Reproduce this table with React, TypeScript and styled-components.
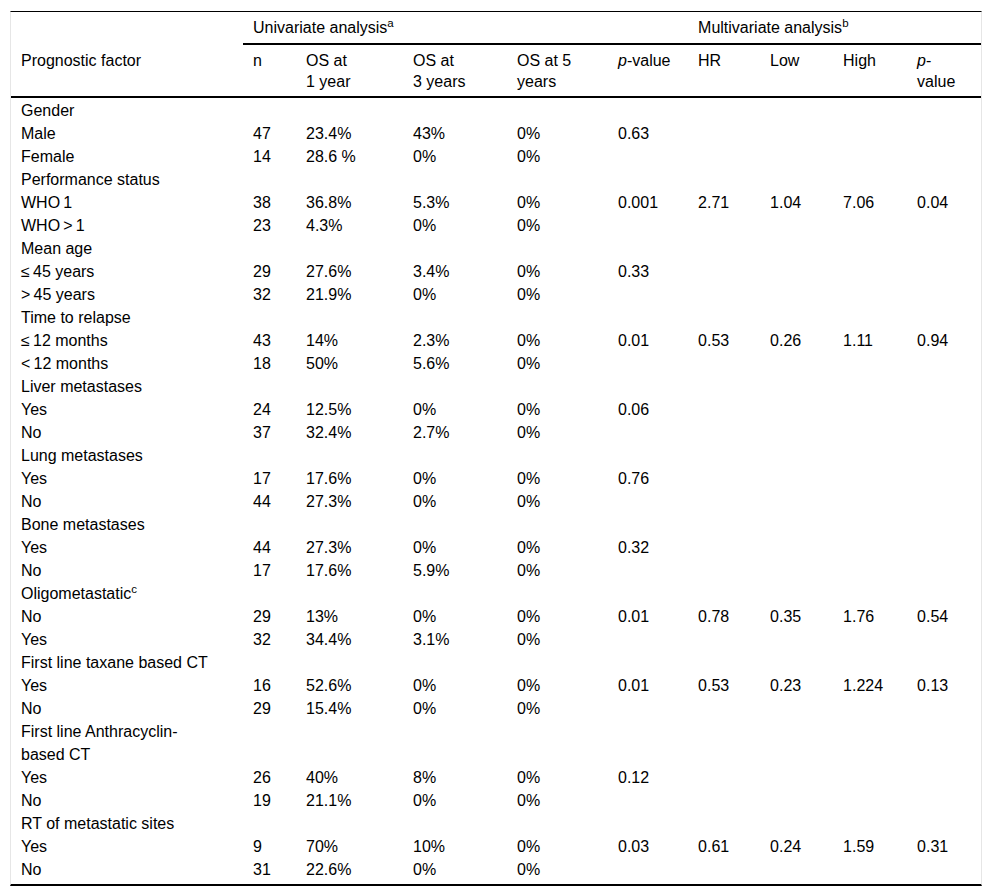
import styled, { createGlobalStyle } from "styled-components";
import { ReactNode } from "react";

const GlobalStyle = createGlobalStyle`
  body {
    margin: 0;
    background: #fff;
    color: #000;
    font-family: "Liberation Sans", Arial, sans-serif;
  }
`;

const Page = styled.div`
  padding: 11px 11px 10px 10px;
`;

const Table = styled.table`
  width: 971px;
  table-layout: fixed;
  border-collapse: separate;
  border-spacing: 0;
  border-top: 1px solid #000;
  border-left: 1px solid #e6e6e6;
  border-right: 1px solid #e6e6e6;
  border-bottom: 2px solid #000;
  font-size: 16px;
  line-height: 23px;
`;

const HeadCell = styled.th<{ $rule?: boolean; $top?: boolean }>`
  text-align: left;
  font-weight: normal;
  vertical-align: top;
  padding: ${(p) => (p.$top ? "4px 10px 4px" : "5px 10px 4px")};
  line-height: ${(p) => (p.$top ? "23px" : "21px")};
  white-space: pre-line;
  border-bottom: ${(p) => (p.$rule ? "2px solid #000" : "none")};
`;

const Row = styled.tr<{ $last?: boolean }>`
  td {
    padding-bottom: ${(p) => (p.$last ? "3px" : "0")};
  }
`;

const Cell = styled.td`
  padding: 0 10px;
  vertical-align: top;
  white-space: pre-line;
`;

const FirstRow = styled.tr`
  td {
    padding-top: 1px;
  }
`;

const Sup = styled.sup`
  font-size: 11.5px;
  line-height: 0;
  vertical-align: 6px;
`;

const Italic = styled.i`
  font-style: italic;
`;

const widths = [232, 53, 107, 104, 101, 80, 72, 73, 74, 74];

type Line = string[];

const rows: Line[] = [
  ["Gender"],
  ["Male", "47", "23.4%", "43%", "0%", "0.63"],
  ["Female", "14", "28.6 %", "0%", "0%"],
  ["Performance status"],
  ["WHO\u20091", "38", "36.8%", "5.3%", "0%", "0.001", "2.71", "1.04", "7.06", "0.04"],
  ["WHO\u2009>\u20091", "23", "4.3%", "0%", "0%"],
  ["Mean age"],
  ["\u2264\u200945 years", "29", "27.6%", "3.4%", "0%", "0.33"],
  [">\u200945 years", "32", "21.9%", "0%", "0%"],
  ["Time to relapse"],
  ["\u2264\u200912 months", "43", "14%", "2.3%", "0%", "0.01", "0.53", "0.26", "1.11", "0.94"],
  ["<\u200912 months", "18", "50%", "5.6%", "0%"],
  ["Liver metastases"],
  ["Yes", "24", "12.5%", "0%", "0%", "0.06"],
  ["No", "37", "32.4%", "2.7%", "0%"],
  ["Lung metastases"],
  ["Yes", "17", "17.6%", "0%", "0%", "0.76"],
  ["No", "44", "27.3%", "0%", "0%"],
  ["Bone metastases"],
  ["Yes", "44", "27.3%", "0%", "0%", "0.32"],
  ["No", "17", "17.6%", "5.9%", "0%"],
  ["Oligometastatic^c"],
  ["No", "29", "13%", "0%", "0%", "0.01", "0.78", "0.35", "1.76", "0.54"],
  ["Yes", "32", "34.4%", "3.1%", "0%"],
  ["First line taxane based CT"],
  ["Yes", "16", "52.6%", "0%", "0%", "0.01", "0.53", "0.23", "1.224", "0.13"],
  ["No", "29", "15.4%", "0%", "0%"],
  ["First line Anthracyclin-\nbased CT"],
  ["Yes", "26", "40%", "8%", "0%", "0.12"],
  ["No", "19", "21.1%", "0%", "0%"],
  ["RT of metastatic sites"],
  ["Yes", "9", "70%", "10%", "0%", "0.03", "0.61", "0.24", "1.59", "0.31"],
  ["No", "31", "22.6%", "0%", "0%"],
];

const label = (text: string): ReactNode => {
  const [main, note] = text.split("^");
  return note ? (
    <>
      {main}
      <Sup>{note}</Sup>
    </>
  ) : (
    main
  );
};

const App = () => {
  return (
    <>
      <GlobalStyle />
      <Page>
        <Table>
          <colgroup>
            {widths.map((w, i) => (
              <col key={i} style={{ width: w }} />
            ))}
          </colgroup>
          <thead>
            <tr>
              <HeadCell $top />
              <HeadCell $top $rule colSpan={5}>
                Univariate analysis<Sup>a</Sup>
              </HeadCell>
              <HeadCell $top $rule colSpan={4}>
                Multivariate analysis<Sup>b</Sup>
              </HeadCell>
            </tr>
            <tr>
              <HeadCell $rule>Prognostic factor</HeadCell>
              <HeadCell $rule>n</HeadCell>
              <HeadCell $rule>{"OS at\n1 year"}</HeadCell>
              <HeadCell $rule>{"OS at\n3 years"}</HeadCell>
              <HeadCell $rule>{"OS at 5\nyears"}</HeadCell>
              <HeadCell $rule>
                <Italic>p</Italic>-value
              </HeadCell>
              <HeadCell $rule>HR</HeadCell>
              <HeadCell $rule>Low</HeadCell>
              <HeadCell $rule>High</HeadCell>
              <HeadCell $rule>
                <Italic>p</Italic>-{"\n"}value
              </HeadCell>
            </tr>
          </thead>
          <tbody>
            {rows.map((r, i) => {
              const cells = widths.map((_, c) => (
                <Cell key={c}>{c === 0 ? label(r[0]) : r[c] ?? ""}</Cell>
              ));
              if (i === 0) return <FirstRow key={i}>{cells}</FirstRow>;
              return (
                <Row key={i} $last={i === rows.length - 1}>
                  {cells}
                </Row>
              );
            })}
          </tbody>
        </Table>
      </Page>
    </>
  );
};

export default App;
